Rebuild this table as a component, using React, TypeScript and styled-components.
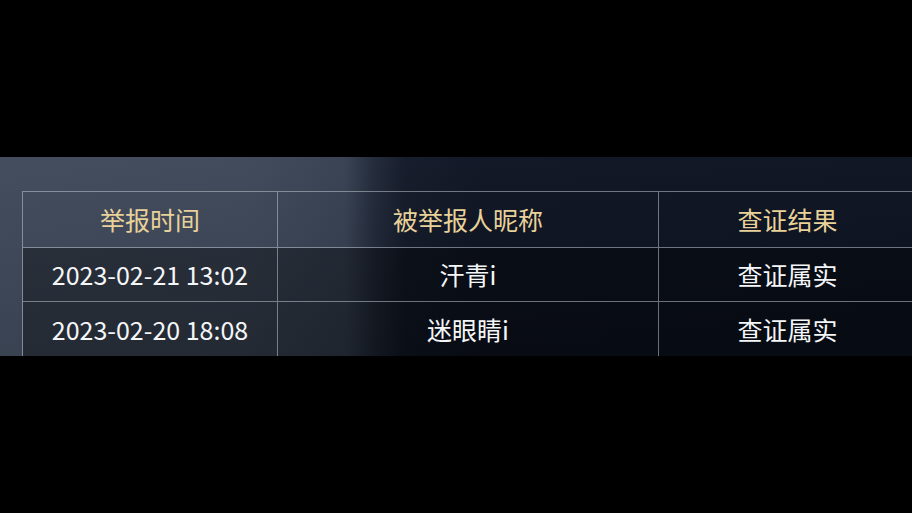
import React from "react";
import styled, { createGlobalStyle } from "styled-components";

const Global = createGlobalStyle`
  html, body { margin: 0; padding: 0; background: #000; }
  body { width: 912px; height: 513px; overflow: hidden; font-family: "Noto Sans CJK SC", "Noto Sans", sans-serif; }
`;

const Page = styled.div`
  width: 912px;
  height: 513px;
  background: #000;
  padding-top: 157px;
  box-sizing: border-box;
`;

const Band = styled.section`
  height: 199px;
  overflow: hidden;
  box-sizing: border-box;
  padding: 34px 0 0 22px;
  background:
    linear-gradient(180deg, rgba(255,255,255,0.02) 0%, rgba(0,0,0,0.1) 100%),
    linear-gradient(90deg, #404a5b 0%, #3e4859 250px, #364051 345px, #202838 375px, #121928 405px, #0e1423 480px, #0c1321 100%);
`;

const Table = styled.div`
  display: grid;
  grid-template-columns: 255px 381px 258px;
  grid-template-rows: 56px 54px 56px;
  width: 896px;
  border-top: 1px solid rgba(190, 196, 206, 0.55);
  border-left: 1px solid rgba(190, 196, 206, 0.55);
`;

const Cell = styled.div<{ $head?: boolean }>`
  display: flex;
  align-items: center;
  justify-content: center;
  box-sizing: border-box;
  border-right: 1px solid rgba(190, 196, 206, 0.55);
  border-bottom: 1px solid rgba(190, 196, 206, 0.55);
  background: ${(p) => (p.$head ? "transparent" : "rgba(0,0,0,0.35)")};
  color: ${(p) => (p.$head ? "#e9d29a" : "#f4f6f8")};
  font-size: 25px;
  line-height: 1;
  white-space: nowrap;
`;

const rows = [
  ["2023-02-21 13:02", "汗青i", "查证属实"],
  ["2023-02-20 18:08", "迷眼睛i", "查证属实"],
];

export default function App() {
  return (
    <>
      <Global />
      <Page>
        <Band>
          <Table>
            <Cell $head>举报时间</Cell>
            <Cell $head>被举报人昵称</Cell>
            <Cell $head>查证结果</Cell>
            {rows.map((r, i) =>
              r.map((c, j) => <Cell key={`${i}-${j}`}>{c}</Cell>)
            )}
          </Table>
        </Band>
      </Page>
    </>
  );
}
